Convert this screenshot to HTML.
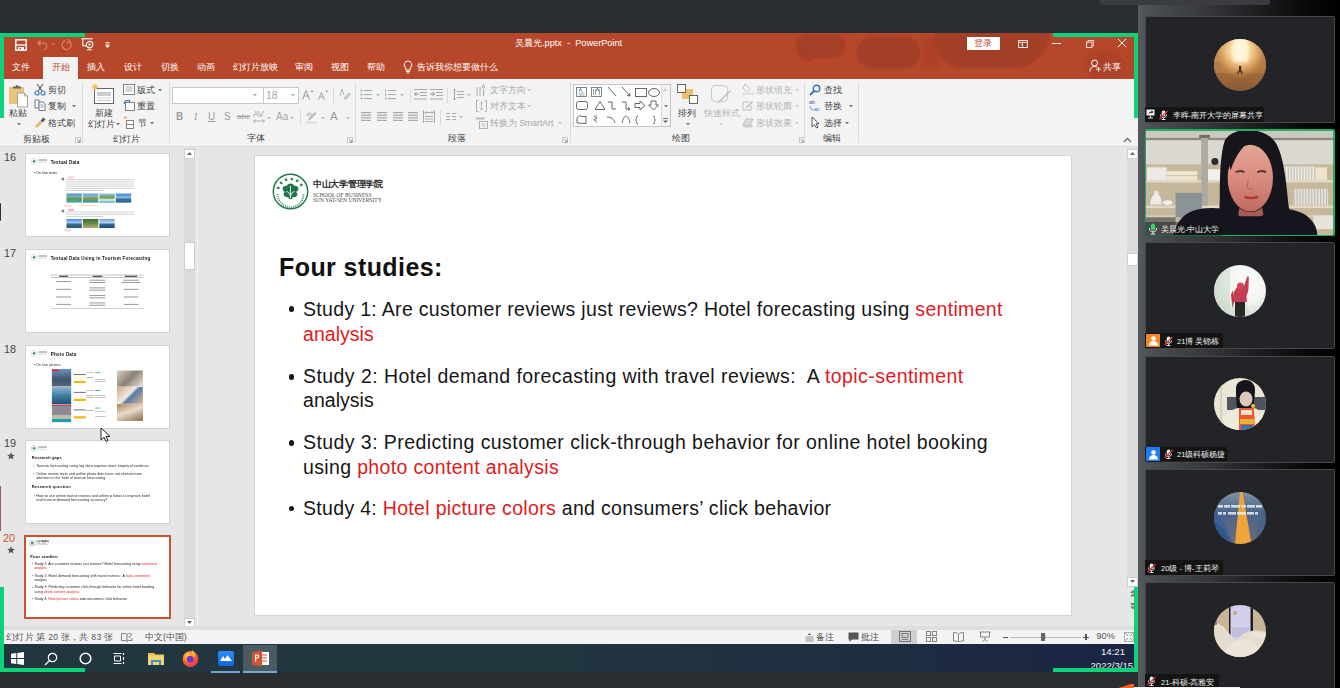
<!DOCTYPE html>
<html><head><meta charset="utf-8">
<style>
*{margin:0;padding:0;box-sizing:border-box}
html,body{width:1340px;height:688px;overflow:hidden;background:#2b2e31;font-family:"Liberation Sans",sans-serif}
.a{position:absolute}
.t{position:absolute;white-space:nowrap;line-height:1}
#title{left:0;top:33px;width:1138px;height:46px;background:#b7472a}
#ribbon{left:0;top:79px;width:1138px;height:67px;background:#f3f3f3}
#work{left:0;top:146px;width:1138px;height:484px;background:#e6e6e6}
#status{left:0;top:630px;width:1138px;height:14px;background:#f3f3f3}
#task{left:0;top:644px;width:1138px;height:28px;background:linear-gradient(90deg,#22363f 0%,#22373f 45%,#1f2f41 72%,#1b2443 100%)}
#panel{left:1138px;top:0;width:202px;height:688px;background:linear-gradient(90deg,#56595d 0px,#4a4d51 8%,#35373a 35%,#1c1d1f 60%,#080808 85%,#000 100%)}
#topbar{left:1100px;top:-4px;width:170px;height:9px;background:#3a3c40;border-radius:0 0 3px 3px}
.tile{position:absolute;left:1145px;width:190px;height:107px;background:#232427;border:1px solid #46474b;border-radius:2px}
.green{position:absolute;background:#0dd27a}
.slide{left:255px;top:156px;width:816px;height:459px;background:#fff;box-shadow:0 0 0 1px #d4d4d4}
.thumb{position:absolute;left:26px;width:143px;height:82px;background:#fff;box-shadow:0 0 0 1px #d0d0d0}
</style></head><body>
<div id="title" class="a"></div>
<div id="ribbon" class="a"></div>
<div id="work" class="a"></div>
<div id="rbline" class="a" style="left:0;top:146px;width:1138px;height:1px;background:#dbdbdb"></div>
<div id="status" class="a"></div>
<div id="task" class="a"></div>
<div id="panel" class="a"></div>
<div id="topbar" class="a"></div>

<!-- TITLE BAR -->
<div class="a" style="left:760px;top:33px;width:378px;height:46px;overflow:hidden">
 <div class="a" style="left:36px;top:1px;width:49px;height:24px;border-radius:12px;background:#a53f27;filter:blur(1.2px)"></div>
 <div class="a" style="left:40px;top:20px;width:10px;height:8px;background:#a53f27;filter:blur(1.2px);transform:skewX(30deg)"></div>
 <div class="a" style="left:97px;top:4px;width:63px;height:31px;border-radius:15px;background:#a33e27;filter:blur(1.2px)"></div>
 <div class="a" style="left:162px;top:4px;width:18px;height:30px;background:#ab4229;filter:blur(1.5px);opacity:.8"></div>
 <div class="a" style="left:175px;top:-2px;width:115px;height:37px;border-radius:0 0 40px 30px;background:#a43f27;filter:blur(1.2px)"></div>
 <div class="a" style="left:325px;top:18px;width:40px;height:30px;border-radius:50%;background:#ab4229;filter:blur(2px)"></div>
</div>
<svg class="a" style="left:15px;top:38.8px" width="12" height="12" viewBox="0 0 12 12"><rect x=".8" y=".8" width="10.4" height="10.4" fill="none" stroke="#fff" stroke-width="1.4"/><path d="M.8 6h10.4" stroke="#fff" stroke-width="1.3"/><rect x="3" y="8" width="6" height="3.2" fill="#fff"/><rect x="4.5" y="8.8" width="1.6" height="1.6" fill="#b7472a"/></svg>
<svg class="a" style="left:35.5px;top:38.5px" width="20" height="11" viewBox="0 0 20 11"><path d="M2.5 4.2h5a3.2 3.2 0 0 1 0 6.4" fill="none" stroke="#d48670" stroke-width="1.2"/><path d="M4.6 1.5L1.8 4.2l2.8 2.7" fill="none" stroke="#d48670" stroke-width="1.2"/><path d="M15.5 4.5h3.5l-1.75 2z" fill="#d48670"/></svg>
<svg class="a" style="left:60.5px;top:38.5px" width="12" height="12" viewBox="0 0 12 12"><path d="M8.8 2.6A4.6 4.6 0 1 1 4.2 1.6" fill="none" stroke="#d48670" stroke-width="1.2"/><path d="M6.5 .3l2.6 2.4-3 1.6" fill="none" stroke="#d48670" stroke-width="1.1"/></svg>
<svg class="a" style="left:81px;top:38px" width="13" height="13" viewBox="0 0 13 13"><path d="M.3 .8h11.4" stroke="#fff" stroke-width="1.1"/><path d="M1.8 .8v6.9h3.4" fill="none" stroke="#fff" stroke-width="1.1"/><circle cx="8.6" cy="6.6" r="3.2" fill="none" stroke="#fff" stroke-width="1.1"/><path d="M7.6 5v3.2l2.5-1.6z" fill="#fff"/><path d="M6 11.8h5M8.3 9.8v2" stroke="#fff" stroke-width=".9"/></svg>
<svg class="a" style="left:105px;top:41.5px" width="5" height="6" viewBox="0 0 5 6"><rect x=".5" y="0" width="4" height="1" fill="#f3d8d0"/><rect x=".5" y="1.6" width="4" height="1" fill="#f3d8d0"/><path d="M0 3.2h5L2.5 6z" fill="#fff"/></svg>
<div class="t" style="left:515px;top:39px;font-size:9.2px;color:#fff">吴晨光.pptx&nbsp; - &nbsp;PowerPoint</div>
<div class="a" style="left:967px;top:37px;width:33px;height:13px;background:#fff"></div>
<div class="t" style="left:974px;top:39px;font-size:9px;color:#b7472a">登录</div>
<svg class="a" style="left:1018px;top:40px" width="10" height="8" viewBox="0 0 12 10"><rect x="0.6" y="0.6" width="10.8" height="8.8" fill="none" stroke="#fff" stroke-width="1.1"/><path d="M0.6 3h10.8M5.5 3v6" stroke="#fff" stroke-width="1"/><path d="M3 5l1 1 1-1" stroke="#fff" fill="none" stroke-width=".8"/></svg>
<div class="a" style="left:1052px;top:43px;width:9px;height:1px;background:#fff"></div>
<svg class="a" style="left:1086px;top:39.5px" width="8" height="8" viewBox="0 0 10 10"><rect x="0.6" y="2.6" width="6.8" height="6.8" fill="none" stroke="#fff" stroke-width="1"/><path d="M2.5 2.6V0.6h6.8v6.8H7.4" fill="none" stroke="#fff" stroke-width="1"/></svg>
<svg class="a" style="left:1117px;top:38px" width="10" height="10" viewBox="0 0 11 11"><path d="M1 1l9 9M10 1l-9 9" stroke="#fff" stroke-width="1.1"/></svg>
<!-- tabs -->
<div class="a" style="left:43px;top:57px;width:35px;height:22px;background:#f3f3f3"></div>
<div class="t" style="left:12px;top:63px;font-size:8.6px;color:#fff">文件</div>
<div class="t" style="left:52px;top:63px;font-size:8.6px;color:#b7472a">开始</div>
<div class="t" style="left:87px;top:63px;font-size:8.6px;color:#fff">插入</div>
<div class="t" style="left:124px;top:63px;font-size:8.6px;color:#fff">设计</div>
<div class="t" style="left:161px;top:63px;font-size:8.6px;color:#fff">切换</div>
<div class="t" style="left:197px;top:63px;font-size:8.6px;color:#fff">动画</div>
<div class="t" style="left:233px;top:63px;font-size:8.6px;color:#fff">幻灯片放映</div>
<div class="t" style="left:295px;top:63px;font-size:8.6px;color:#fff">审阅</div>
<div class="t" style="left:331px;top:63px;font-size:8.6px;color:#fff">视图</div>
<div class="t" style="left:367px;top:63px;font-size:8.6px;color:#fff">帮助</div>
<svg class="a" style="left:403px;top:60px" width="10" height="14" viewBox="0 0 10 14"><path d="M5 1a3.8 3.8 0 0 0-2.2 6.9V10h4.4V7.9A3.8 3.8 0 0 0 5 1z" fill="none" stroke="#fff" stroke-width="1"/><path d="M3 11.5h4M3.6 13h2.8" stroke="#fff" stroke-width="1"/></svg>
<div class="t" style="left:417px;top:63px;font-size:8.6px;color:#fff">告诉我你想要做什么</div>
<svg class="a" style="left:1089px;top:59px" width="12" height="13" viewBox="0 0 12 13"><circle cx="5.5" cy="4" r="3" fill="none" stroke="#fff" stroke-width="1"/><path d="M0.8 12.5c0-3 2-5 4.7-5 1 0 1.8.2 2.5.7" fill="none" stroke="#fff" stroke-width="1"/><path d="M9.5 8v4.5M7.2 10.2h4.6" stroke="#fff" stroke-width="1"/></svg>
<div class="t" style="left:1103px;top:63px;font-size:8.6px;color:#fff">共享</div>


<!-- RIBBON -->
<svg class="a" style="left:8px;top:84px" width="22" height="24" viewBox="0 0 22 24"><rect x="1" y="3" width="15" height="17" rx="1" fill="#e9c57a"/><path d="M5 4.5V2.5h2.5a1.5 1.5 0 0 1 3 0H13v2z" fill="#666"/><path d="M9.5 9h7l3 3v11h-10z" fill="#fff" stroke="#999" stroke-width=".9"/><path d="M16.5 9v3h3" fill="none" stroke="#999" stroke-width=".9"/></svg>
<div class="t" style="left:9px;top:109.1px;font-size:8.6px;color:#444">粘贴</div>
<svg class="a" style="left:17.2px;top:123px" width="4" height="2.4" viewBox="0 0 5 3"><path d="M0 0h5L2.5 3z" fill="#777"/></svg>
<svg class="a" style="left:34px;top:83px" width="12" height="13" viewBox="0 0 12 13"><path d="M3 1l5 7M9 1L4 8" stroke="#555" stroke-width="1.1"/><circle cx="3" cy="10" r="2" fill="none" stroke="#3b7cc4" stroke-width="1.2"/><circle cx="9" cy="10" r="2" fill="none" stroke="#3b7cc4" stroke-width="1.2"/></svg>
<div class="t" style="left:48px;top:85.6px;font-size:8.6px;color:#444">剪切</div>
<svg class="a" style="left:34px;top:99px" width="12" height="12" viewBox="0 0 12 12"><path d="M1 1h4v8H1z" fill="#fff" stroke="#666" stroke-width=".9"/><path d="M5 3h4l2 2v6.5H5z" fill="#fff" stroke="#666" stroke-width=".9"/><path d="M6.5 6h3M6.5 8h3" stroke="#3b7cc4" stroke-width=".8"/></svg>
<div class="t" style="left:48px;top:101.6px;font-size:8.6px;color:#444">复制</div>
<svg class="a" style="left:72.2px;top:105px" width="4" height="2.4" viewBox="0 0 5 3"><path d="M0 0h5L2.5 3z" fill="#777"/></svg>
<svg class="a" style="left:34px;top:116px" width="13" height="12" viewBox="0 0 13 12"><path d="M1 10l5-5 2 2-5 5z" fill="#e6b865"/><path d="M6.5 4.5l3-3 2 2-3 3z" fill="#555"/></svg>
<div class="t" style="left:48px;top:118.6px;font-size:8.6px;color:#444">格式刷</div>
<div class="t" style="left:23px;top:134.6px;font-size:8.6px;color:#444">剪贴板</div>
<svg class="a" style="left:75px;top:137px" width="6" height="6" viewBox="0 0 6 6"><path d="M0.5 0.5h5v5h-5z" fill="none" stroke="#bbb" stroke-width=".8"/><path d="M2 2l3 3M5 3v2H3" stroke="#888" stroke-width=".8" fill="none"/></svg>
<div class="a" style="left:82px;top:82px;width:1px;height:61px;background:#dadada"></div>
<svg class="a" style="left:91px;top:83px" width="24" height="22" viewBox="0 0 24 22"><rect x="3.5" y="5.5" width="19" height="15" fill="#fff" stroke="#666" stroke-width="1"/><rect x="6" y="9" width="14" height="4" fill="#ccc"/><path d="M6 15h14M6 17.5h14" stroke="#ccc" stroke-width="1"/><circle cx="4" cy="4" r="2.2" fill="#f0c050"/><path d="M4 0v8M0 4h8M1.2 1.2l5.6 5.6M6.8 1.2l-5.6 5.6" stroke="#f0c050" stroke-width=".8"/></svg>
<div class="t" style="left:95px;top:108.6px;font-size:8.6px;color:#444">新建</div>
<div class="t" style="left:88px;top:119.6px;font-size:8.6px;color:#444">幻灯片</div>
<svg class="a" style="left:116.2px;top:123px" width="4" height="2.4" viewBox="0 0 5 3"><path d="M0 0h5L2.5 3z" fill="#777"/></svg>
<svg class="a" style="left:123px;top:84px" width="12" height="11" viewBox="0 0 12 11"><rect x=".5" y=".5" width="11" height="10" fill="#fff" stroke="#777" stroke-width=".9"/><path d="M2.5 3h7M2.5 5h7M2.5 7h7" stroke="#999" stroke-width=".8"/></svg>
<div class="t" style="left:137px;top:85.6px;font-size:8.6px;color:#444">版式</div>
<svg class="a" style="left:158.2px;top:89px" width="4" height="2.4" viewBox="0 0 5 3"><path d="M0 0h5L2.5 3z" fill="#777"/></svg>
<svg class="a" style="left:123px;top:100px" width="12" height="11" viewBox="0 0 12 11"><rect x="2.5" y="2.5" width="9" height="8" fill="#fff" stroke="#777" stroke-width=".9"/><path d="M1 4a4 4 0 0 1 6-3" fill="none" stroke="#3b7cc4" stroke-width="1.3"/><path d="M5.5 0l2 1.2-1.5 1.5" fill="#3b7cc4"/></svg>
<div class="t" style="left:137px;top:101.6px;font-size:8.6px;color:#444">重置</div>
<svg class="a" style="left:123px;top:116px" width="12" height="13" viewBox="0 0 12 13"><path d="M1 1.5h3" stroke="#f0a030" stroke-width="1.5"/><rect x="3.5" y="4.5" width="7" height="8" fill="#fff" stroke="#777" stroke-width=".9"/><path d="M3.5 8.5h7" stroke="#777" stroke-width=".9"/></svg>
<div class="t" style="left:138px;top:118.6px;font-size:8.6px;color:#444">节</div>
<svg class="a" style="left:150.2px;top:122px" width="4" height="2.4" viewBox="0 0 5 3"><path d="M0 0h5L2.5 3z" fill="#777"/></svg>
<div class="t" style="left:113px;top:134.6px;font-size:8.6px;color:#444">幻灯片</div>
<div class="a" style="left:169px;top:82px;width:1px;height:61px;background:#dadada"></div>
<div class="a" style="left:172px;top:87px;width:92px;height:17px;background:#fff;border:1px solid #c8c8c8"></div>
<div class="a" style="left:263px;top:87px;width:36px;height:17px;background:#fff;border:1px solid #c8c8c8"></div>
<svg class="a" style="left:253.2px;top:94px" width="4" height="2.4" viewBox="0 0 5 3"><path d="M0 0h5L2.5 3z" fill="#aaa"/></svg>
<svg class="a" style="left:291.2px;top:94px" width="4" height="2.4" viewBox="0 0 5 3"><path d="M0 0h5L2.5 3z" fill="#aaa"/></svg>
<div class="t" style="left:266px;top:90.1px;font-size:10.5px;color:#a6a6a6">18</div>
<svg class="a" style="left:302px;top:89px" width="12" height="11" viewBox="0 0 12 11"><path d="M0.5 10.5L4 1.5l3.5 9M2 7h4" fill="none" stroke="#999" stroke-width="1"/><path d="M8.5 3l1.5-2 1.5 2z" fill="#999"/></svg>
<svg class="a" style="left:318px;top:90px" width="11" height="10" viewBox="0 0 11 10"><path d="M0.5 9.5L3.5 2.5l3 7M1.7 7h3.6" fill="none" stroke="#999" stroke-width=".9"/><path d="M7.5 0.5h3l-1.5 2z" fill="#999"/></svg>
<div class="a" style="left:333px;top:88px;width:1px;height:16px;background:#dadada"></div>
<svg class="a" style="left:339px;top:88px" width="12" height="12" viewBox="0 0 12 12"><path d="M1 8l2-7 2 6" fill="none" stroke="#aaa" stroke-width=".9"/><path d="M5 10l5-5 1.5 1.5-5 5z" fill="#ccc" stroke="#aaa" stroke-width=".6"/></svg>
<div class="t" style="left:176px;top:112px;font-size:10px;color:#9c9c9c;font-weight:bold">B</div>
<div class="t" style="left:194px;top:112px;font-size:10px;color:#9c9c9c;font-style:italic;font-family:Liberation Serif">I</div>
<div class="t" style="left:208px;top:112px;font-size:10px;color:#9c9c9c;text-decoration:underline">U</div>
<div class="t" style="left:224px;top:112px;font-size:10px;color:#9c9c9c;">S</div>
<div class="t" style="left:237px;top:113px;font-size:8px;color:#a0a0a0;text-decoration:line-through">abc</div>
<div class="t" style="left:253px;top:110px;font-size:8.5px;color:#a0a0a0">AV</div>
<svg class="a" style="left:253px;top:119px" width="12" height="4" viewBox="0 0 12 4"><path d="M0.5 2h11M2.5 0.5L0.5 2l2 1.5M9.5 0.5l2 1.5-2 1.5" fill="none" stroke="#a0a0a0" stroke-width=".8"/></svg>
<svg class="a" style="left:267.2px;top:117px" width="4" height="2.4" viewBox="0 0 5 3"><path d="M0 0h5L2.5 3z" fill="#bdbdbd"/></svg>
<div class="t" style="left:276px;top:112px;font-size:10px;color:#a6a6a6">Aa</div>
<svg class="a" style="left:290.2px;top:117px" width="4" height="2.4" viewBox="0 0 5 3"><path d="M0 0h5L2.5 3z" fill="#bdbdbd"/></svg>
<div class="a" style="left:300px;top:110px;width:1px;height:15px;background:#dadada"></div>
<svg class="a" style="left:305px;top:110px" width="14" height="14" viewBox="0 0 14 14"><text x="1" y="6" font-size="6" fill="#aaa" font-family="Liberation Sans">ab</text><path d="M3 9l7-7 1.5 1.5-7 7z" fill="#bbb"/><rect x="1" y="11.5" width="11" height="2" fill="#ddd"/></svg>
<svg class="a" style="left:321.2px;top:117px" width="4" height="2.4" viewBox="0 0 5 3"><path d="M0 0h5L2.5 3z" fill="#bdbdbd"/></svg>
<div class="t" style="left:330px;top:111px;font-size:11.5px;color:#9a9a9a">A</div>
<svg class="a" style="left:346.2px;top:117px" width="4" height="2.4" viewBox="0 0 5 3"><path d="M0 0h5L2.5 3z" fill="#bdbdbd"/></svg>
<div class="t" style="left:247px;top:133.6px;font-size:8.6px;color:#444">字体</div>
<svg class="a" style="left:347px;top:137px" width="6" height="6" viewBox="0 0 6 6"><path d="M0.5 0.5h5v5h-5z" fill="none" stroke="#bbb" stroke-width=".8"/><path d="M2 2l3 3M5 3v2H3" stroke="#888" stroke-width=".8" fill="none"/></svg>
<div class="a" style="left:355px;top:82px;width:1px;height:61px;background:#dadada"></div>
<svg class="a" style="left:360px;top:89px" width="12" height="11" viewBox="0 0 12 11"><g fill="#aaa"><circle cx="1.5" cy="1.5" r="1.1"/><circle cx="1.5" cy="5.5" r="1.1"/><circle cx="1.5" cy="9.5" r="1.1"/><rect x="4" y="1" width="8" height="1.1"/><rect x="4" y="5" width="8" height="1.1"/><rect x="4" y="9" width="8" height="1.1"/></g></svg>
<svg class="a" style="left:376.2px;top:94px" width="4" height="2.4" viewBox="0 0 5 3"><path d="M0 0h5L2.5 3z" fill="#bdbdbd"/></svg>
<svg class="a" style="left:384px;top:89px" width="12" height="11" viewBox="0 0 12 11"><g fill="#aaa"><rect x="1" y="0.5" width="1" height="2.5"/><rect x="1" y="4.5" width="1.5" height="2"/><rect x="1" y="8.5" width="1.5" height="2"/><rect x="4" y="1" width="8" height="1.1"/><rect x="4" y="5" width="8" height="1.1"/><rect x="4" y="9" width="8" height="1.1"/></g></svg>
<svg class="a" style="left:400.2px;top:94px" width="4" height="2.4" viewBox="0 0 5 3"><path d="M0 0h5L2.5 3z" fill="#bdbdbd"/></svg>
<div class="a" style="left:410px;top:88px;width:1px;height:15px;background:#dadada"></div>
<svg class="a" style="left:414px;top:89px" width="13" height="11" viewBox="0 0 13 11"><g fill="#aaa"><rect x="0" y="0" width="13" height="1"/><rect x="6" y="3" width="7" height="1"/><rect x="6" y="6" width="7" height="1"/><rect x="0" y="9.5" width="13" height="1"/></g><path d="M0.5 5h4.5M2.5 3L0.5 5l2 2" stroke="#888" fill="none" stroke-width=".9"/></svg>
<svg class="a" style="left:430px;top:89px" width="13" height="11" viewBox="0 0 13 11"><g fill="#aaa"><rect x="0" y="0" width="13" height="1"/><rect x="6" y="3" width="7" height="1"/><rect x="6" y="6" width="7" height="1"/><rect x="0" y="9.5" width="13" height="1"/></g><path d="M0 5h4.5M2.5 3l2 2-2 2" stroke="#888" fill="none" stroke-width=".9"/></svg>
<div class="a" style="left:447px;top:88px;width:1px;height:15px;background:#dadada"></div>
<svg class="a" style="left:453px;top:88px" width="11" height="13" viewBox="0 0 11 13"><path d="M1.5 1v11M0 2.5l1.5-1.5 1.5 1.5M0 10.5l1.5 1.5 1.5-1.5" stroke="#999" fill="none" stroke-width=".9"/><g fill="#aaa"><rect x="4" y="3" width="7" height="1"/><rect x="4" y="6" width="7" height="1"/><rect x="4" y="9" width="7" height="1"/></g></svg>
<svg class="a" style="left:467.2px;top:94px" width="4" height="2.4" viewBox="0 0 5 3"><path d="M0 0h5L2.5 3z" fill="#bdbdbd"/></svg>
<svg class="a" style="left:476px;top:84px" width="10" height="12" viewBox="0 0 10 12"><g stroke="#aaa" stroke-width="1"><path d="M1 3v9M4 3v9M7.5 5v7"/></g><path d="M6 4.5l1.5-4 1.5 4" fill="none" stroke="#999" stroke-width=".8"/></svg>
<div class="t" style="left:490px;top:85.6px;font-size:8.6px;color:#a6a6a6">文字方向</div>
<svg class="a" style="left:527.2px;top:89px" width="4" height="2.4" viewBox="0 0 5 3"><path d="M0 0h5L2.5 3z" fill="#c6c6c6"/></svg>
<svg class="a" style="left:476px;top:100px" width="11" height="12" viewBox="0 0 11 12"><path d="M2.5 .5H.5v11h2M8.5 .5h2v11h-2" fill="none" stroke="#aaa" stroke-width=".9"/><path d="M5.5 2v8M4 3.5L5.5 2 7 3.5M4 8.5L5.5 10 7 8.5" fill="none" stroke="#aaa" stroke-width=".8"/></svg>
<div class="t" style="left:490px;top:101.6px;font-size:8.6px;color:#a6a6a6">对齐文本</div>
<svg class="a" style="left:527.2px;top:105px" width="4" height="2.4" viewBox="0 0 5 3"><path d="M0 0h5L2.5 3z" fill="#c6c6c6"/></svg>
<svg class="a" style="left:476px;top:116px" width="12" height="13" viewBox="0 0 12 13"><path d="M0 1.5h9l-1 2H0z" fill="#bbb"/><rect x="3.5" y="5.5" width="8" height="7" fill="none" stroke="#aaa" stroke-width=".9"/><path d="M5.5 8h4M5.5 10h4" stroke="#aaa" stroke-width=".7"/></svg>
<div class="t" style="left:490px;top:118.6px;font-size:8.6px;color:#a6a6a6">转换为 SmartArt</div>
<svg class="a" style="left:558.2px;top:122px" width="4" height="2.4" viewBox="0 0 5 3"><path d="M0 0h5L2.5 3z" fill="#c6c6c6"/></svg>
<svg class="a" style="left:361px;top:112px" width="10" height="10.4" viewBox="0 0 10 10.4"><rect x="0" y="0.0" width="10" height="1.2" fill="#a9a9a9"/><rect x="0" y="2.6" width="10" height="1.2" fill="#a9a9a9"/><rect x="0" y="5.2" width="10" height="1.2" fill="#a9a9a9"/><rect x="0" y="7.800000000000001" width="10" height="1.2" fill="#a9a9a9"/></svg>
<svg class="a" style="left:377px;top:112px" width="10" height="10.4" viewBox="0 0 10 10.4"><rect x="0" y="0.0" width="10" height="1.2" fill="#a9a9a9"/><rect x="0" y="2.6" width="10" height="1.2" fill="#a9a9a9"/><rect x="0" y="5.2" width="10" height="1.2" fill="#a9a9a9"/><rect x="0" y="7.800000000000001" width="10" height="1.2" fill="#a9a9a9"/></svg>
<svg class="a" style="left:393px;top:112px" width="10" height="10.4" viewBox="0 0 10 10.4"><rect x="0" y="0.0" width="10" height="1.2" fill="#a9a9a9"/><rect x="0" y="2.6" width="10" height="1.2" fill="#a9a9a9"/><rect x="0" y="5.2" width="10" height="1.2" fill="#a9a9a9"/><rect x="0" y="7.800000000000001" width="10" height="1.2" fill="#a9a9a9"/></svg>
<svg class="a" style="left:408px;top:112px" width="10" height="10.4" viewBox="0 0 10 10.4"><rect x="0" y="0.0" width="10" height="1.2" fill="#a9a9a9"/><rect x="0" y="2.6" width="10" height="1.2" fill="#a9a9a9"/><rect x="0" y="5.2" width="10" height="1.2" fill="#a9a9a9"/><rect x="0" y="7.800000000000001" width="10" height="1.2" fill="#a9a9a9"/></svg>
<svg class="a" style="left:423px;top:110px" width="12" height="13" viewBox="0 0 12 13"><g fill="#aaa"><rect x="0" y="0" width="1" height="13"/><rect x="11" y="0" width="1" height="13"/><rect x="2" y="6" width="8" height="1"/><rect x="2" y="8.5" width="8" height="1"/><rect x="2" y="11" width="8" height="1"/></g><path d="M2 2.5h8M3.5 1L2 2.5 3.5 4M8.5 1L10 2.5 8.5 4" stroke="#999" fill="none" stroke-width=".8"/></svg>
<div class="a" style="left:440px;top:110px;width:1px;height:15px;background:#dadada"></div>
<svg class="a" style="left:446px;top:113px" width="10" height="8" viewBox="0 0 10 8"><g fill="#aaa"><rect x="0" y="0" width="4" height="1"/><rect x="0" y="3" width="4" height="1"/><rect x="0" y="6" width="4" height="1"/><rect x="6" y="0" width="4" height="1"/><rect x="6" y="3" width="4" height="1"/><rect x="6" y="6" width="4" height="1"/></g></svg>
<svg class="a" style="left:459.2px;top:116px" width="4" height="2.4" viewBox="0 0 5 3"><path d="M0 0h5L2.5 3z" fill="#bdbdbd"/></svg>
<div class="t" style="left:448px;top:133.6px;font-size:8.6px;color:#444">段落</div>
<svg class="a" style="left:562px;top:137px" width="6" height="6" viewBox="0 0 6 6"><path d="M0.5 0.5h5v5h-5z" fill="none" stroke="#bbb" stroke-width=".8"/><path d="M2 2l3 3M5 3v2H3" stroke="#888" stroke-width=".8" fill="none"/></svg>
<div class="a" style="left:570px;top:82px;width:1px;height:61px;background:#dadada"></div>
<div class="a" style="left:573px;top:84px;width:98px;height:43px;background:#fff;border:1px solid #c6c6c6"></div>
<div class="a" style="left:661px;top:85px;width:9px;height:41px;background:#f3f3f3;border-left:1px solid #ddd"></div>
<svg class="a" style="left:664.2px;top:105px" width="4" height="2.4" viewBox="0 0 5 3"><path d="M0 0h5L2.5 3z" fill="#777"/></svg>
<svg class="a" style="left:663px;top:118px" width="6" height="6" viewBox="0 0 6 6"><rect x="0" y="0" width="5" height=".9" fill="#666"/><path d="M0 2.5h5L2.5 5z" fill="#666"/></svg>
<div class="a" style="left:663px;top:88px;width:5px;height:3px;border-bottom:3px solid #ccc;border-left:2.5px solid transparent;border-right:2.5px solid transparent;width:0;height:0"></div>
<svg class="a" style="left:574px;top:85px" width="87" height="42" viewBox="0 0 87 42"><g fill="none" stroke="#555" stroke-width=".9">
<rect x="2.5" y="2.5" width="10" height="9" stroke="#777"/><path d="M4.5 8h6M4.5 10h6" stroke="#999"/><path d="M5 6.5l1.5-3 1.5 3" stroke="#3b7cc4"/>
<rect x="17.5" y="2.5" width="10" height="9" stroke="#777"/><path d="M19.5 4v6M21.5 4v6M25.5 4v6" stroke="#999"/><path d="M22.5 6l1-3 1 3" stroke="#3b7cc4"/>
<path d="M34 2l8 9"/><path d="M48 2l8 9M56 11l-3-.5M56 11l-.5-3"/>
<rect x="61.5" y="3.5" width="11" height="8"/><ellipse cx="80" cy="7.5" rx="5.5" ry="4"/>
<rect x="2.5" y="16.5" width="11" height="8" rx="2"/><path d="M21 24.5l5-8 5 8z"/><path d="M34 17h4v7h4"/><path d="M48 17h4v7h4M56 24l-2-1.5M56 24l-2 1.5"/>
<path d="M61 18.5h5v-2.5l5 4.5-5 4.5v-2.5h-5z"/><path d="M77 16h5v4h2.5l-5 5-5-5H77z"/>
<path d="M3 38V32.5c2-2 4-2 5-1h4v7z"/><path d="M20 31l3 2-3 2 3 2M22 30v1"/><path d="M33 32c4 0 7 2 8 6"/><path d="M48 38c1-5 3-7 4-7s3 2 4 7"/>
<path d="M64 31c-1.5 0-1.5 1-1.5 2.5s-1 1.5-1 1.5 1 0 1 1.5 0 2.5 1.5 2.5" /><path d="M79 31c1.5 0 1.5 1 1.5 2.5s1 1.5 1 1.5-1 0-1 1.5 0 2.5-1.5 2.5"/>
</g></svg>
<svg class="a" style="left:677px;top:84px" width="22" height="20" viewBox="0 0 22 20"><rect x="5" y="5" width="11" height="10" fill="#eec06a"/><rect x=".5" y=".5" width="8" height="8" fill="#fff" stroke="#555" stroke-width=".9"/><rect x="12.5" y="11.5" width="8" height="8" fill="#fff" stroke="#555" stroke-width=".9"/></svg>
<div class="t" style="left:678px;top:108.6px;font-size:8.6px;color:#444">排列</div>
<svg class="a" style="left:686.2px;top:123px" width="4" height="2.4" viewBox="0 0 5 3"><path d="M0 0h5L2.5 3z" fill="#777"/></svg>
<svg class="a" style="left:710px;top:84px" width="22" height="22" viewBox="0 0 22 22"><rect x="1.5" y="1.5" width="16" height="16" rx="4" fill="#f7f2f7" stroke="#c8c8c8" stroke-width="1"/><path d="M20 6L9 17l-2 3 3-2L21 7z" fill="#bbb"/></svg>
<div class="t" style="left:704px;top:108.6px;font-size:8.6px;color:#b3b3b3">快速样式</div>
<svg class="a" style="left:719.2px;top:123px" width="4" height="2.4" viewBox="0 0 5 3"><path d="M0 0h5L2.5 3z" fill="#d0d0d0"/></svg>
<svg class="a" style="left:742px;top:83px" width="12" height="12" viewBox="0 0 12 12"><path d="M3 1l5 5-3 3-4-4z" fill="none" stroke="#bbb" stroke-width=".9"/><rect x="0" y="10" width="12" height="2" fill="#e0e0e0"/></svg>
<div class="t" style="left:756px;top:85.6px;font-size:8.6px;color:#b3b3b3">形状填充</div>
<svg class="a" style="left:795.2px;top:89px" width="4" height="2.4" viewBox="0 0 5 3"><path d="M0 0h5L2.5 3z" fill="#d0d0d0"/></svg>
<svg class="a" style="left:742px;top:99px" width="12" height="12" viewBox="0 0 12 12"><path d="M1 3h6M1 3v8h8V6" fill="none" stroke="#bbb" stroke-width=".9"/><path d="M4 8l6-6 1 1-6 6z" fill="#bbb"/></svg>
<div class="t" style="left:756px;top:101.6px;font-size:8.6px;color:#b3b3b3">形状轮廓</div>
<svg class="a" style="left:795.2px;top:105px" width="4" height="2.4" viewBox="0 0 5 3"><path d="M0 0h5L2.5 3z" fill="#d0d0d0"/></svg>
<svg class="a" style="left:742px;top:117px" width="12" height="11" viewBox="0 0 12 11"><path d="M1 8l3-6h7l-3 6z" fill="#ddd" stroke="#bbb" stroke-width=".9"/><ellipse cx="6" cy="9" rx="5" ry="1.5" fill="#ccc"/></svg>
<div class="t" style="left:756px;top:118.6px;font-size:8.6px;color:#b3b3b3">形状效果</div>
<svg class="a" style="left:795.2px;top:122px" width="4" height="2.4" viewBox="0 0 5 3"><path d="M0 0h5L2.5 3z" fill="#d0d0d0"/></svg>
<div class="t" style="left:672px;top:133.6px;font-size:8.6px;color:#444">绘图</div>
<svg class="a" style="left:799px;top:137px" width="6" height="6" viewBox="0 0 6 6"><path d="M0.5 0.5h5v5h-5z" fill="none" stroke="#bbb" stroke-width=".8"/><path d="M2 2l3 3M5 3v2H3" stroke="#888" stroke-width=".8" fill="none"/></svg>
<div class="a" style="left:804px;top:82px;width:1px;height:61px;background:#dadada"></div>
<svg class="a" style="left:809px;top:84px" width="12" height="12" viewBox="0 0 12 12"><circle cx="7.5" cy="4.5" r="3.3" fill="none" stroke="#3b6fb6" stroke-width="1.4"/><path d="M5 7l-4 4" stroke="#3b6fb6" stroke-width="1.8"/></svg>
<div class="t" style="left:824px;top:85.6px;font-size:8.6px;color:#444">查找</div>
<svg class="a" style="left:809px;top:99px" width="14" height="13" viewBox="0 0 14 13"><text x="0" y="5" font-size="5.5" fill="#6b4fa0" font-family="Liberation Sans">ab</text><text x="5" y="12" font-size="5.5" fill="#3b7cc4" font-family="Liberation Sans">ac</text><path d="M1 7c0 3 2 4 4 4" fill="none" stroke="#3b7cc4" stroke-width=".8"/></svg>
<div class="t" style="left:824px;top:101.6px;font-size:8.6px;color:#444">替换</div>
<svg class="a" style="left:849.2px;top:105px" width="4" height="2.4" viewBox="0 0 5 3"><path d="M0 0h5L2.5 3z" fill="#777"/></svg>
<svg class="a" style="left:811px;top:116px" width="9" height="13" viewBox="0 0 9 13"><path d="M1 1v10l2.5-2.5 2 3.5 1.5-.8-2-3.5H8z" fill="#fff" stroke="#444" stroke-width=".9"/></svg>
<div class="t" style="left:824px;top:118.6px;font-size:8.6px;color:#444">选择</div>
<svg class="a" style="left:845.2px;top:122px" width="4" height="2.4" viewBox="0 0 5 3"><path d="M0 0h5L2.5 3z" fill="#777"/></svg>
<div class="t" style="left:823px;top:133.6px;font-size:8.6px;color:#444">编辑</div>
<div class="a" style="left:858px;top:82px;width:1px;height:61px;background:#dadada"></div>
<svg class="a" style="left:1123px;top:137px" width="9" height="6" viewBox="0 0 9 6"><path d="M1 5l3.5-3.5L8 5" fill="none" stroke="#666" stroke-width="1.3"/></svg>
<!-- /RIBBON -->
<div class="a slide"></div>
<!-- SLIDE -->
<div class="t" style="left:303px;top:299.5px;font-size:19.5px;letter-spacing:0.318px;color:#161616">Study 1: Are customer reviews just reviews? Hotel forecasting using <span style="color:#e3191c">sentiment</span></div>
<div class="t" style="left:303px;top:324.7px;font-size:19.5px;letter-spacing:0.035px;color:#161616"><span style="color:#e3191c">analysis</span></div>
<div class="t" style="left:303px;top:367.3px;font-size:19.5px;letter-spacing:0.439px;color:#161616">Study 2: Hotel demand forecasting with travel reviews:&nbsp; A <span style="color:#e3191c">topic-sentiment</span></div>
<div class="t" style="left:303px;top:391.0px;font-size:19.5px;letter-spacing:0.035px;color:#161616">analysis</div>
<div class="t" style="left:303px;top:433.3px;font-size:19.5px;letter-spacing:0.429px;color:#161616">Study 3: Predicting customer click-through behavior for online hotel booking</div>
<div class="t" style="left:303px;top:457.8px;font-size:19.5px;letter-spacing:0.355px;color:#161616">using <span style="color:#e3191c">photo content analysis</span></div>
<div class="t" style="left:303px;top:499.0px;font-size:19.5px;letter-spacing:0.316px;color:#161616">Study 4: <span style="color:#e3191c">Hotel picture colors</span> and consumers&#8217; click behavior</div>
<div class="a" style="left:289px;top:306.4px;width:5.4px;height:5.4px;border-radius:50%;background:#161616"></div>
<div class="a" style="left:289px;top:374.2px;width:5.4px;height:5.4px;border-radius:50%;background:#161616"></div>
<div class="a" style="left:289px;top:440.2px;width:5.4px;height:5.4px;border-radius:50%;background:#161616"></div>
<div class="a" style="left:289px;top:505.9px;width:5.4px;height:5.4px;border-radius:50%;background:#161616"></div>
<div class="t" style="left:279px;top:254.5px;font-size:25px;font-weight:bold;letter-spacing:.42px;color:#111">Four studies:</div>
<svg class="a" style="left:272px;top:173px" width="37" height="37" viewBox="0 0 37 37">
<circle cx="18.5" cy="18.5" r="17.2" fill="#fff" stroke="#217a4c" stroke-width="1.5"/>
<path d="M6 16a12.8 12.8 0 0 1 25 0" fill="none" stroke="#2b7d52" stroke-width="2.6" stroke-dasharray="2.2 3.6" />
<path d="M5.5 21a13 13 0 0 0 26 0" fill="none" stroke="#4f9470" stroke-width="2" stroke-dasharray="1 1.1"/>
<path d="M18.5 10.5c-2.2 0-3.3 1.4-3.6 2.4-1.6-.6-4 .2-4.3 2.4-.3 2.3 1.5 3.4 2.3 3.6-1.2.8-1.6 2.4-.8 3.8 1 1.7 3.2 1.6 4 1.2.6 1.6 1.5 2.4 2.4 2.4s1.8-.8 2.4-2.4c.8.4 3 .5 4-1.2.8-1.4.4-3-.8-3.8.8-.2 2.6-1.3 2.3-3.6-.3-2.2-2.7-3-4.3-2.4-.3-1-1.4-2.4-3.6-2.4z" fill="#1f7448"/>
<path d="M18.5 13v12M14.5 18.5c2 .5 3.2 2 4 4.5M22.5 18.5c-2 .5-3.2 2-4 4.5" stroke="#fff" stroke-width=".9" fill="none"/>
</svg>
<div class="t" style="left:313px;top:179.8px;font-size:9.2px;font-weight:bold;color:#2a2a2a;letter-spacing:-.3px">中山大学管理学院</div>
<div class="t" style="left:313px;top:192.8px;font-size:5.6px;color:#4a4a4a;font-family:'Liberation Serif',serif;letter-spacing:0px">SCHOOL OF BUSINESS</div>
<div class="t" style="left:313px;top:197.6px;font-size:5.6px;color:#4a4a4a;font-family:'Liberation Serif',serif;letter-spacing:-.04px">SUN YAT-SEN UNIVERSITY</div>
<!-- /SLIDE -->
<!-- WORK -->
<div class="t" style="left:4px;top:151.8px;font-size:10.8px;color:#444">16</div>
<div class="t" style="left:4px;top:247.8px;font-size:10.8px;color:#444">17</div>
<div class="t" style="left:4px;top:343.8px;font-size:10.8px;color:#444">18</div>
<div class="t" style="left:4px;top:437.8px;font-size:10.8px;color:#444">19</div>
<svg class="a" style="left:6.5px;top:452px" width="8" height="8" viewBox="0 0 10 10"><path d="M5 0.3l1.4 3.2 3.4.3-2.6 2.2.8 3.4L5 7.6 2 9.4l.8-3.4L.2 3.8l3.4-.3z" fill="#555"/></svg>
<div class="t" style="left:3px;top:532.8px;font-size:10.8px;color:#c9532f">20</div>
<svg class="a" style="left:6.5px;top:546px" width="8" height="8" viewBox="0 0 10 10"><path d="M5 0.3l1.4 3.2 3.4.3-2.6 2.2.8 3.4L5 7.6 2 9.4l.8-3.4L.2 3.8l3.4-.3z" fill="#555"/></svg>
<div class="a" style="left:26px;top:154px;width:143px;height:82px;background:#fff;box-shadow:0 0 0 1px #d2d2d2"></div>
<div class="a" style="left:26px;top:154px;width:817px;height:459px;transform-origin:0 0;transform:scale(0.17503);overflow:hidden">
<svg class="a" style="left:26px;top:22px" width="40" height="40" viewBox="0 0 37 37"><circle cx="18.5" cy="18.5" r="15" fill="none" stroke="#5a9a78" stroke-width="3" stroke-dasharray="3 2"/><circle cx="18.5" cy="18.5" r="7" fill="#4f8f6d"/></svg><div class="a" style="left:70px;top:30px;width:50px;height:9px;background:#777;opacity:.55"></div><div class="a" style="left:70px;top:44px;width:50px;height:5px;background:#aaa;opacity:.5"></div>
<div class="t" style="left:141px;top:32.9px;font-size:26px;font-weight:bold;color:#161616;letter-spacing:1px">Textual Data</div>
<div class="a" style="left:48px;top:101px;width:6px;height:6px;border-radius:50%;background:#161616"></div><div class="t" style="left:58px;top:98.2px;font-size:21px;color:#161616;letter-spacing:.3px">On line texts</div>
<div class="a" style="left:203px;top:135px;width:16px;height:16px;border-radius:50%;background:#777"></div><div class="a" style="left:240px;top:128px;width:36px;height:12px;border:2px solid #e05050;border-radius:50%"></div><div class="a" style="left:228px;top:146px;width:390px;height:3px;background:#a8a8a8"></div>
<div class="a" style="left:228px;top:158px;width:390px;height:3px;background:#a8a8a8"></div>
<div class="a" style="left:228px;top:170px;width:390px;height:3px;background:#a8a8a8"></div>
<div class="a" style="left:228px;top:182px;width:390px;height:3px;background:#a8a8a8"></div>
<div class="a" style="left:228px;top:194px;width:390px;height:3px;background:#a8a8a8"></div>
<div class="a" style="left:228px;top:206px;width:215px;height:3px;background:#a8a8a8"></div>
<div class="a" style="left:231px;top:226px;width:88px;height:52px;background:linear-gradient(180deg,#3f86c8 0%,#7fb0d0 30%,#5c9a5a 55%,#4aa8b0 100%)"></div>
<div class="a" style="left:325px;top:226px;width:88px;height:52px;background:linear-gradient(180deg,#5a9ad8 0%,#8ab8d8 25%,#8a9a50 50%,#2f9aa0 100%)"></div>
<div class="a" style="left:419px;top:226px;width:88px;height:52px;background:linear-gradient(180deg,#9ac0e0 0%,#6a9a50 45%,#e0f0f0 70%,#40a0b0 100%)"></div>
<div class="a" style="left:513px;top:226px;width:88px;height:52px;background:linear-gradient(180deg,#3f7fd0 0%,#8ac0e8 45%,#3a70a0 60%,#2f6a8a 100%)"></div>
<div class="a" style="left:220px;top:290px;width:36px;height:12px;border:2px solid #e05050;border-radius:50%"></div><div class="a" style="left:300px;top:292px;width:110px;height:3px;background:#f0c080"></div>
<div class="a" style="left:203px;top:318px;width:16px;height:16px;border-radius:50%;background:#777"></div><div class="a" style="left:240px;top:313px;width:36px;height:12px;border:2px solid #e05050;border-radius:50%"></div><div class="a" style="left:228px;top:330px;width:390px;height:3px;background:#a8a8a8"></div>
<div class="a" style="left:228px;top:342px;width:390px;height:3px;background:#a8a8a8"></div>
<div class="a" style="left:228px;top:354px;width:215px;height:3px;background:#a8a8a8"></div>
<div class="a" style="left:231px;top:371px;width:88px;height:52px;background:linear-gradient(180deg,#4a8ad8 0%,#9ac4e8 40%,#3a6a8a 60%,#2a5a7a 100%)"></div>
<div class="a" style="left:325px;top:371px;width:88px;height:52px;background:linear-gradient(180deg,#3a6a3a 0%,#6a8a4a 50%,#b8a870 100%)"></div>
<div class="a" style="left:419px;top:371px;width:88px;height:52px;background:linear-gradient(180deg,#6aa0d8 0%,#b8d0e8 40%,#2f6a9a 60%,#1f4a6a 100%)"></div>
<div class="a" style="left:220px;top:430px;width:36px;height:12px;border:2px solid #e05050;border-radius:50%"></div></div>
<div class="a" style="left:26px;top:249.5px;width:143px;height:82px;background:#fff;box-shadow:0 0 0 1px #d2d2d2"></div>
<div class="a" style="left:26px;top:249.5px;width:817px;height:459px;transform-origin:0 0;transform:scale(0.17503);overflow:hidden">
<svg class="a" style="left:26px;top:22px" width="40" height="40" viewBox="0 0 37 37"><circle cx="18.5" cy="18.5" r="15" fill="none" stroke="#5a9a78" stroke-width="3" stroke-dasharray="3 2"/><circle cx="18.5" cy="18.5" r="7" fill="#4f8f6d"/></svg><div class="a" style="left:70px;top:30px;width:50px;height:9px;background:#777;opacity:.55"></div><div class="a" style="left:70px;top:44px;width:50px;height:5px;background:#aaa;opacity:.5"></div>
<div class="t" style="left:141px;top:32.9px;font-size:26px;font-weight:bold;color:#161616;letter-spacing:1.1px">Textual Data Using in Tourism Forecasting</div>
<div class="a" style="left:143px;top:142px;width:530px;height:1.5px;background:#555"></div><div class="a" style="left:143px;top:158px;width:530px;height:1.5px;background:#555"></div><div class="a" style="left:143px;top:334px;width:530px;height:1.5px;background:#777"></div><div class="a" style="left:190.0px;top:147px;width:50px;height:6px;background:#333"></div><div class="a" style="left:380.5px;top:147px;width:55px;height:6px;background:#333"></div><div class="a" style="left:565.0px;top:147px;width:70px;height:6px;background:#333"></div><div class="a" style="left:173px;top:178px;width:84px;height:5px;background:#8a8a8a"></div><div class="a" style="left:363px;top:170px;width:90px;height:5px;background:#8a8a8a"></div><div class="a" style="left:363px;top:183px;width:90px;height:5px;background:#8a8a8a"></div><div class="a" style="left:555px;top:170px;width:90px;height:5px;background:#8a8a8a"></div><div class="a" style="left:545px;top:183px;width:110px;height:5px;background:#8a8a8a"></div><div class="a" style="left:173px;top:222px;width:84px;height:5px;background:#8a8a8a"></div><div class="a" style="left:363px;top:214px;width:90px;height:5px;background:#8a8a8a"></div><div class="a" style="left:363px;top:227px;width:90px;height:5px;background:#8a8a8a"></div><div class="a" style="left:558px;top:222px;width:84px;height:5px;background:#8a8a8a"></div><div class="a" style="left:173px;top:266px;width:84px;height:5px;background:#8a8a8a"></div><div class="a" style="left:363px;top:258px;width:90px;height:5px;background:#8a8a8a"></div><div class="a" style="left:363px;top:271px;width:90px;height:5px;background:#8a8a8a"></div><div class="a" style="left:558px;top:266px;width:84px;height:5px;background:#8a8a8a"></div><div class="a" style="left:173px;top:308px;width:84px;height:5px;background:#8a8a8a"></div><div class="a" style="left:363px;top:300px;width:90px;height:5px;background:#8a8a8a"></div><div class="a" style="left:363px;top:313px;width:90px;height:5px;background:#8a8a8a"></div><div class="a" style="left:558px;top:308px;width:84px;height:5px;background:#8a8a8a"></div></div>
<div class="a" style="left:26px;top:345.5px;width:143px;height:82px;background:#fff;box-shadow:0 0 0 1px #d2d2d2"></div>
<div class="a" style="left:26px;top:345.5px;width:817px;height:459px;transform-origin:0 0;transform:scale(0.17503);overflow:hidden">
<svg class="a" style="left:26px;top:22px" width="40" height="40" viewBox="0 0 37 37"><circle cx="18.5" cy="18.5" r="15" fill="none" stroke="#5a9a78" stroke-width="3" stroke-dasharray="3 2"/><circle cx="18.5" cy="18.5" r="7" fill="#4f8f6d"/></svg><div class="a" style="left:70px;top:30px;width:50px;height:9px;background:#777;opacity:.55"></div><div class="a" style="left:70px;top:44px;width:50px;height:5px;background:#aaa;opacity:.5"></div>
<div class="t" style="left:141px;top:34.9px;font-size:26px;font-weight:bold;color:#161616;letter-spacing:1px">Photo Data</div>
<div class="a" style="left:48px;top:101px;width:6px;height:6px;border-radius:50%;background:#161616"></div><div class="t" style="left:58px;top:99.2px;font-size:21px;color:#333;letter-spacing:.3px">On line photos</div>
<div class="a" style="left:148px;top:131px;width:110px;height:100px;background:linear-gradient(180deg,#6d93c4,#3e5670 60%,#5d6470)"></div><div class="a" style="left:148px;top:135px;width:40px;height:10px;background:#d03030"></div><div class="a" style="left:148px;top:233px;width:110px;height:100px;background:linear-gradient(180deg,#8fb7d8,#3f7fa0 50%,#1e4f80)"></div><div class="a" style="left:148px;top:335px;width:110px;height:100px;background:linear-gradient(180deg,#cc4444 0 10%,#8d8a98 10% 60%,#c6b8aa 60% 80%,#1aa0a0 80%)"></div><div class="a" style="left:272px;top:160px;width:70px;height:6px;background:#777"></div><div class="a" style="left:272px;top:200px;width:70px;height:12px;background:#f2b90f;border-radius:3px"></div><div class="a" style="left:345px;top:150px;width:40px;height:50px;background:repeating-linear-gradient(180deg,#bbb 0 3px,transparent 3px 14px)"></div><div class="a" style="left:395px;top:150px;width:30px;height:5px;background:#2dbd8a"></div><div class="a" style="left:395px;top:170px;width:60px;height:40px;background:repeating-linear-gradient(180deg,#c4c4c4 0 3px,transparent 3px 10px)"></div><div class="a" style="left:272px;top:262px;width:70px;height:6px;background:#777"></div><div class="a" style="left:272px;top:302px;width:70px;height:12px;background:#f2b90f;border-radius:3px"></div><div class="a" style="left:345px;top:252px;width:40px;height:50px;background:repeating-linear-gradient(180deg,#bbb 0 3px,transparent 3px 14px)"></div><div class="a" style="left:395px;top:252px;width:30px;height:5px;background:#2dbd8a"></div><div class="a" style="left:395px;top:272px;width:60px;height:40px;background:repeating-linear-gradient(180deg,#c4c4c4 0 3px,transparent 3px 10px)"></div><div class="a" style="left:272px;top:362px;width:70px;height:6px;background:#777"></div><div class="a" style="left:272px;top:402px;width:70px;height:12px;background:#f2b90f;border-radius:3px"></div><div class="a" style="left:345px;top:352px;width:40px;height:50px;background:repeating-linear-gradient(180deg,#bbb 0 3px,transparent 3px 14px)"></div><div class="a" style="left:395px;top:352px;width:30px;height:5px;background:#2dbd8a"></div><div class="a" style="left:395px;top:372px;width:60px;height:40px;background:repeating-linear-gradient(180deg,#c4c4c4 0 3px,transparent 3px 10px)"></div><div class="a" style="left:520px;top:140px;width:148px;height:92px;background:linear-gradient(135deg,#d8d0c0,#8b8276 50%,#efe6d8)"></div><div class="a" style="left:520px;top:234px;width:148px;height:96px;background:linear-gradient(135deg,#c9ad80,#f0ebe5 45%,#5b7aa8 55%,#d4b88a)"></div><div class="a" style="left:520px;top:332px;width:148px;height:96px;background:linear-gradient(160deg,#b08050,#e9dccb 45%,#8b6a4a)"></div></div>
<div class="a" style="left:26px;top:441px;width:143px;height:82px;background:#fff;box-shadow:0 0 0 1px #d2d2d2"></div>
<div class="a" style="left:26px;top:441px;width:817px;height:459px;transform-origin:0 0;transform:scale(0.17503);overflow:hidden">
<svg class="a" style="left:26px;top:22px" width="40" height="40" viewBox="0 0 37 37"><circle cx="18.5" cy="18.5" r="15" fill="none" stroke="#5a9a78" stroke-width="3" stroke-dasharray="3 2"/><circle cx="18.5" cy="18.5" r="7" fill="#4f8f6d"/></svg><div class="a" style="left:70px;top:30px;width:50px;height:9px;background:#777;opacity:.55"></div><div class="a" style="left:70px;top:44px;width:50px;height:5px;background:#aaa;opacity:.5"></div>
<div class="t" style="left:33px;top:84.5px;font-size:23px;font-weight:bold;color:#161616;letter-spacing:.6px">Research gaps</div>
<div class="a" style="left:42px;top:138px;width:5px;height:5px;border-radius:50%;background:#161616"></div><div class="t" style="left:58px;top:131.6px;font-size:20.5px;color:#161616;letter-spacing:.35px;color:#222">Tourism forecasting using big data requires more empirical evidence.</div>
<div class="a" style="left:42px;top:184px;width:5px;height:5px;border-radius:50%;background:#161616"></div><div class="t" style="left:58px;top:177.6px;font-size:20.5px;color:#161616;letter-spacing:.35px;color:#222">Online review texts and online photo data have not elicited more</div>
<div class="t" style="left:58px;top:200.6px;font-size:20.5px;color:#161616;letter-spacing:.35px;color:#222">attention in the field of tourism forecasting.</div>
<div class="t" style="left:33px;top:252.4px;font-size:23px;font-weight:bold;color:#161616;letter-spacing:1px">Research question</div>
<div class="a" style="left:47px;top:310px;width:5px;height:5px;border-radius:50%;background:#161616"></div><div class="t" style="left:59px;top:303.6px;font-size:20.5px;color:#161616;letter-spacing:.35px;color:#222">How to use online tourist reviews and online p hotos to improve hotel</div>
<div class="t" style="left:59px;top:327.6px;font-size:20.5px;color:#161616;letter-spacing:.35px;color:#222">and tourism demand forecasting accuracy?</div>
</div>
<div class="a" style="left:24px;top:534.5px;width:146.5px;height:84.5px;border:2.6px solid #c9532f;background:#fff"></div>
<div class="a" style="left:26px;top:537px;width:817px;height:459px;transform-origin:0 0;transform:scale(0.17503);overflow:hidden">
<div class="t" style="left:48.0px;top:143.5px;font-size:19.5px;letter-spacing:0.318px;color:#161616">Study 1: Are customer reviews just reviews? Hotel forecasting using <span style="color:#e3191c">sentiment</span></div>
<div class="t" style="left:48.0px;top:168.7px;font-size:19.5px;letter-spacing:0.035px;color:#161616"><span style="color:#e3191c">analysis</span></div>
<div class="t" style="left:48.0px;top:211.3px;font-size:19.5px;letter-spacing:0.439px;color:#161616">Study 2: Hotel demand forecasting with travel reviews:&nbsp; A <span style="color:#e3191c">topic-sentiment</span></div>
<div class="t" style="left:48.0px;top:235.0px;font-size:19.5px;letter-spacing:0.035px;color:#161616">analysis</div>
<div class="t" style="left:48.0px;top:277.3px;font-size:19.5px;letter-spacing:0.429px;color:#161616">Study 3: Predicting customer click-through behavior for online hotel booking</div>
<div class="t" style="left:48.0px;top:301.8px;font-size:19.5px;letter-spacing:0.355px;color:#161616">using <span style="color:#e3191c">photo content analysis</span></div>
<div class="t" style="left:48.0px;top:343.0px;font-size:19.5px;letter-spacing:0.316px;color:#161616">Study 4: <span style="color:#e3191c">Hotel picture colors</span> and consumers&#8217; click behavior</div>
<div class="a" style="left:34.0px;top:150.4px;width:5.4px;height:5.4px;border-radius:50%;background:#161616"></div>
<div class="a" style="left:34.0px;top:218.2px;width:5.4px;height:5.4px;border-radius:50%;background:#161616"></div>
<div class="a" style="left:34.0px;top:284.2px;width:5.4px;height:5.4px;border-radius:50%;background:#161616"></div>
<div class="a" style="left:34.0px;top:349.9px;width:5.4px;height:5.4px;border-radius:50%;background:#161616"></div>
<div class="t" style="left:24.0px;top:98.5px;font-size:25px;font-weight:bold;letter-spacing:.42px;color:#111">Four studies:</div>
<svg class="a" style="left:17.0px;top:17.0px" width="37" height="37" viewBox="0 0 37 37">
<circle cx="18.5" cy="18.5" r="17.2" fill="#fff" stroke="#217a4c" stroke-width="1.5"/>
<path d="M6 16a12.8 12.8 0 0 1 25 0" fill="none" stroke="#2b7d52" stroke-width="2.6" stroke-dasharray="2.2 3.6" />
<path d="M5.5 21a13 13 0 0 0 26 0" fill="none" stroke="#4f9470" stroke-width="2" stroke-dasharray="1 1.1"/>
<path d="M18.5 10.5c-2.2 0-3.3 1.4-3.6 2.4-1.6-.6-4 .2-4.3 2.4-.3 2.3 1.5 3.4 2.3 3.6-1.2.8-1.6 2.4-.8 3.8 1 1.7 3.2 1.6 4 1.2.6 1.6 1.5 2.4 2.4 2.4s1.8-.8 2.4-2.4c.8.4 3 .5 4-1.2.8-1.4.4-3-.8-3.8.8-.2 2.6-1.3 2.3-3.6-.3-2.2-2.7-3-4.3-2.4-.3-1-1.4-2.4-3.6-2.4z" fill="#1f7448"/>
<path d="M18.5 13v12M14.5 18.5c2 .5 3.2 2 4 4.5M22.5 18.5c-2 .5-3.2 2-4 4.5" stroke="#fff" stroke-width=".9" fill="none"/>
</svg>
<div class="t" style="left:58.0px;top:23.8px;font-size:9.2px;font-weight:bold;color:#2a2a2a;letter-spacing:-.3px">中山大学管理学院</div>
<div class="t" style="left:58.0px;top:36.8px;font-size:5.6px;color:#4a4a4a;font-family:'Liberation Serif',serif;letter-spacing:0px">SCHOOL OF BUSINESS</div>
<div class="t" style="left:58.0px;top:41.6px;font-size:5.6px;color:#4a4a4a;font-family:'Liberation Serif',serif;letter-spacing:-.04px">SUN YAT-SEN UNIVERSITY</div>
</div>
<div class="a" style="left:184px;top:148px;width:11px;height:480px;background:#dcdcdc"></div>
<div class="a" style="left:184px;top:148.5px;width:11px;height:10px;background:#fff;border:1px solid #cfcfcf"></div>
<svg class="a" style="left:187px;top:151.5px" width="5" height="3" viewBox="0 0 5 3"><path d="M0 3h5L2.5 0z" fill="#666"/></svg>
<div class="a" style="left:184px;top:241.5px;width:11px;height:28px;background:#fff;border:1px solid #cfcfcf"></div>
<div class="a" style="left:184px;top:617.5px;width:11px;height:10px;background:#fff;border:1px solid #cfcfcf"></div>
<svg class="a" style="left:187px;top:621px" width="5" height="3" viewBox="0 0 5 3"><path d="M0 0h5L2.5 3z" fill="#666"/></svg>
<div class="a" style="left:197px;top:146px;width:1px;height:484px;background:#ededed"></div>
<div class="a" style="left:1127px;top:148px;width:10.5px;height:439px;background:#dcdcdc"></div>
<div class="a" style="left:1127px;top:148.5px;width:10.5px;height:10px;background:#fff;border:1px solid #cfcfcf"></div>
<svg class="a" style="left:1130px;top:151.5px" width="5" height="3" viewBox="0 0 5 3"><path d="M0 3h5L2.5 0z" fill="#666"/></svg>
<div class="a" style="left:1127px;top:253px;width:10.5px;height:12.5px;background:#fff;border:1px solid #cfcfcf"></div>
<div class="a" style="left:1127px;top:576.5px;width:10.5px;height:10px;background:#fff;border:1px solid #cfcfcf"></div>
<svg class="a" style="left:1130px;top:580px" width="5" height="3" viewBox="0 0 5 3"><path d="M0 0h5L2.5 3z" fill="#666"/></svg>
<svg class="a" style="left:1129.5px;top:590px" width="6" height="7" viewBox="0 0 6 7"><path d="M0 3L3 0l3 3zM0 6.5L3 3.5l3 3z" fill="#777"/></svg>
<svg class="a" style="left:1129.5px;top:603px" width="6" height="7" viewBox="0 0 6 7"><path d="M0 0l3 3 3-3zM0 3.5l3 3 3-3z" fill="#777"/></svg>
<div class="a" style="left:0;top:626px;width:1138px;height:4px;background:#dedede"></div>
<div class="a" style="left:0;top:203px;width:1.3px;height:18px;background:#333;border-radius:0 1px 1px 0"></div>
<div class="a" style="left:0;top:486px;width:1.2px;height:45px;background:#a05a58"></div>
<svg class="a" style="left:100px;top:427px" width="12" height="16" viewBox="0 0 12 16"><path d="M1 1v12l3-2.8 2 4.3 2-.9-2-4.2h4z" fill="#fff" stroke="#222" stroke-width="1"/></svg>
<!-- /WORK -->
<!-- BOTTOM -->
<div class="t" style="left:6px;top:632.6px;font-size:8.6px;color:#555;letter-spacing:.25px">幻灯片 第 20 张，共 83 张</div>
<svg class="a" style="left:121px;top:632px" width="12" height="10" viewBox="0 0 12 10"><path d="M.5 1.5h4l1.5 1v7L4.5 8.5h-4zM6 2.5l1.5-1h2M6 9.5l1.5-1H11V6" fill="none" stroke="#777" stroke-width=".9"/><path d="M8 6l3-4.5" stroke="#777" stroke-width="1"/></svg>
<div class="t" style="left:145px;top:632.6px;font-size:8.6px;color:#555;">中文(中国)</div>
<svg class="a" style="left:805px;top:632px" width="9" height="10" viewBox="0 0 9 10"><path d="M2.5 3L4.5 1l2 2z" fill="#666"/><path d="M.5 5h8M.5 7h8M.5 9h8" stroke="#777" stroke-width=".8"/></svg>
<div class="t" style="left:816px;top:632.6px;font-size:8.6px;color:#444;">备注</div>
<svg class="a" style="left:848px;top:632px" width="11" height="11" viewBox="0 0 11 11"><path d="M.5.5h10v7H4L1.5 10V7.5h-1z" fill="#555"/></svg>
<div class="t" style="left:861px;top:632.6px;font-size:8.6px;color:#444;">批注</div>
<div class="a" style="left:891px;top:629.5px;width:26px;height:14.5px;background:#cfcfcf"></div>
<svg class="a" style="left:899px;top:631px" width="12" height="11" viewBox="0 0 12 11"><rect x=".5" y=".5" width="11" height="10" fill="none" stroke="#666" stroke-width=".9"/><rect x="3" y="2.5" width="6" height="4" fill="none" stroke="#666" stroke-width=".8"/><path d="M3 8.5h6" stroke="#666" stroke-width=".8"/></svg>
<svg class="a" style="left:926px;top:631px" width="11" height="11" viewBox="0 0 11 11"><g fill="none" stroke="#777" stroke-width=".9"><rect x=".5" y=".5" width="4" height="4"/><rect x="6.5" y=".5" width="4" height="4"/><rect x=".5" y="6.5" width="4" height="4"/><rect x="6.5" y="6.5" width="4" height="4"/></g></svg>
<svg class="a" style="left:953px;top:631px" width="11" height="11" viewBox="0 0 11 11"><path d="M.5 1.5c2 0 4 .5 5 1.5 1-1 3-1.5 5-1.5v8.5c-2 0-4 .3-5 1-1-.7-3-1-5-1z" fill="none" stroke="#777" stroke-width=".9"/><path d="M5.5 3v7.5" stroke="#777" stroke-width=".9"/></svg>
<svg class="a" style="left:979px;top:631px" width="12" height="11" viewBox="0 0 12 11"><path d="M.5 1h11M1.5 1v5h9V1M6 6v2.5M3.5 10.5L6 8.5l2.5 2" fill="none" stroke="#777" stroke-width=".9"/></svg>
<div class="a" style="left:1003px;top:636.5px;width:4.5px;height:1.2px;background:#555"></div>
<div class="a" style="left:1010px;top:636.5px;width:71px;height:1px;background:#bbb"></div>
<div class="a" style="left:1045px;top:635px;width:1px;height:4px;background:#bbb"></div>
<div class="a" style="left:1041px;top:633px;width:3.5px;height:7.5px;background:#666"></div>
<div class="a" style="left:1083px;top:636.5px;width:6px;height:1.2px;background:#555"></div><div class="a" style="left:1085.4px;top:634px;width:1.2px;height:6px;background:#555"></div>
<div class="t" style="left:1096.5px;top:632.3px;font-size:9.2px;color:#555;">90%</div>
<svg class="a" style="left:1124px;top:632px" width="10" height="10" viewBox="0 0 10 10"><rect x=".5" y=".5" width="9" height="9" fill="none" stroke="#999" stroke-width=".8"/><path d="M1.5 1.5l2.5 2.5M8.5 1.5L6 4M1.5 8.5L4 6M8.5 8.5L6 6" stroke="#888" stroke-width=".9"/></svg>
<svg class="a" style="left:11px;top:652px" width="13" height="13" viewBox="0 0 13 13"><path d="M0 1.8l5.3-.8v5H0zM6.3.9L13 0v6H6.3zM0 7h5.3v5L0 11.2zM6.3 7H13v6l-6.7-.9z" fill="#fff"/></svg>
<svg class="a" style="left:44px;top:652px" width="14" height="14" viewBox="0 0 14 14"><circle cx="8.5" cy="5.5" r="4.2" fill="none" stroke="#fff" stroke-width="1.2"/><path d="M5.5 8.5L1 13" stroke="#fff" stroke-width="1.3"/></svg>
<svg class="a" style="left:79px;top:652px" width="13" height="13" viewBox="0 0 13 13"><circle cx="6.5" cy="6.5" r="5.3" fill="none" stroke="#fff" stroke-width="1.5"/></svg>
<svg class="a" style="left:113px;top:652px" width="13" height="13" viewBox="0 0 13 13"><g fill="none" stroke="#fff" stroke-width="1"><path d="M.5 1.5h8M.5 11.5h8M1.5 4h6v5h-6z"/></g><path d="M10.5 1v2M10.5 5v3M10.5 10v2" stroke="#fff" stroke-width="1.2"/></svg>
<svg class="a" style="left:148px;top:652px" width="16" height="14" viewBox="0 0 16 14"><path d="M0 1h6l1.5 1.5H16V13H0z" fill="#f3c04e"/><rect x="0" y="3.5" width="16" height="9.5" fill="#f9d46b"/><path d="M4 13V9h8v4" fill="none" stroke="#3b8fd6" stroke-width="2"/></svg>
<svg class="a" style="left:182px;top:650px" width="17" height="17" viewBox="0 0 17 17"><circle cx="8.5" cy="9" r="7.8" fill="#ff6a2b"/><circle cx="8.5" cy="9" r="7.8" fill="url(#ffg)"/><defs><radialGradient id="ffg" cx=".35" cy=".3" r=".8"><stop offset="0" stop-color="#ffd94a"/><stop offset=".5" stop-color="#ff6a2b"/><stop offset="1" stop-color="#e3246b"/></radialGradient></defs><circle cx="8.3" cy="9.2" r="3.4" fill="#6d36c9"/><path d="M10 1c2 2 2.5 4 1.5 6" stroke="#ffb93a" stroke-width="2" fill="none"/></svg>
<div class="a" style="left:218px;top:650.5px;width:15.5px;height:15.5px;border-radius:2px;background:linear-gradient(180deg,#2c8bff,#1265e0)"></div>
<svg class="a" style="left:219px;top:654px" width="14" height="8" viewBox="0 0 14 8"><path d="M1 7l3-5 2 3 2.5-4L13 7z" fill="#fff"/></svg>
<div class="a" style="left:211px;top:671px;width:29px;height:1.5px;background:#6fa3d6"></div>
<div class="a" style="left:243px;top:644.5px;width:34px;height:27.5px;background:#4a5b64"></div>
<div class="a" style="left:243px;top:671px;width:34px;height:1.5px;background:#76a8d8"></div>
<svg class="a" style="left:252px;top:650px" width="17" height="17" viewBox="0 0 17 17"><rect x="7" y="2" width="10" height="13" fill="#fff"/><path d="M9 5h6M9 8h6M9 11h6" stroke="#d35230" stroke-width="1.2"/><path d="M0 2.2L10 0.5v16L0 14.8z" fill="#d35230"/><path d="M3 4.5h2.3c1.3 0 2 .8 2 2s-.8 2-2 2H4.2v3H3z" fill="#fff"/><path d="M4.2 5.6v1.9h1c.6 0 .9-.4.9-1s-.3-.9-.9-.9z" fill="#d35230"/></svg>
<div class="t" style="left:1101px;top:647.1px;font-size:9.6px;color:#f4f4f4;">14:21</div>
<div class="t" style="left:1090.5px;top:660.6px;font-size:9.6px;color:#f4f4f4;">2022/3/15</div>
<!-- /BOTTOM -->

<div class="tile" style="top:16px"></div>
<div class="tile" style="top:129px;border:2px solid #18b463"></div>
<div class="tile" style="top:242px"></div>
<div class="tile" style="top:356px"></div>
<div class="tile" style="top:469px"></div>
<div class="tile" style="top:582px;height:120px"></div>

<!-- PANEL -->
<svg class="a" style="left:1214px;top:39px;filter:blur(.45px)" width="52" height="52" viewBox="0 0 52 52"><defs><clipPath id="c0"><circle cx="26" cy="26" r="26"/></clipPath></defs><g clip-path="url(#c0)"><defs><radialGradient id="sun" cx=".5" cy=".22" r=".55"><stop offset="0" stop-color="#fffdf0"/><stop offset=".3" stop-color="#fbe2a8"/><stop offset=".7" stop-color="#d39a58"/><stop offset="1" stop-color="#b07844" stop-opacity="0"/></radialGradient><linearGradient id="grd" x1="0" y1="0" x2="0" y2="1"><stop offset="0" stop-color="#c08850"/><stop offset=".5" stop-color="#a87040"/><stop offset="1" stop-color="#8a5a32"/></linearGradient></defs>
<rect width="52" height="52" fill="url(#grd)"/><rect x="0" y="4" width="19" height="30" fill="#b27c46"/><rect x="34" y="4" width="18" height="30" fill="#b0783f"/><rect x="0" y="18" width="19" height="4" fill="#c99258"/>
<rect width="52" height="52" fill="url(#sun)"/><rect x="19" y="-2" width="15" height="25" fill="#fff8e0" opacity=".8" filter="url(#bl)"/><defs><filter id="bl"><feGaussianBlur stdDeviation="1.8"/></filter></defs>
<path d="M26 30l-26 22h10zM26 30l26 22H42z" fill="#9a6638" opacity=".4"/><path d="M25 27h2.2v4l1.5 4h-1.2l-1.5-3-1.6 3h-1.2l1.8-4z" fill="#3b2a20"/></g></svg>
<svg class="a" style="left:1214px;top:265px;filter:blur(.45px)" width="52" height="52" viewBox="0 0 52 52"><defs><clipPath id="c1"><circle cx="26" cy="26" r="26"/></clipPath></defs><g clip-path="url(#c1)"><defs><radialGradient id="mist" cx=".6" cy=".35" r=".75"><stop offset="0" stop-color="#fdfefd"/><stop offset=".55" stop-color="#f0f4f0"/><stop offset="1" stop-color="#c5d3c5"/></radialGradient></defs>
<rect width="52" height="52" fill="url(#mist)"/><path d="M0 0h16v52H0z" fill="#cbd8cb" opacity=".55"/><path d="M14 52l8-14h10l6 14z" fill="#d7e0d5" opacity=".7"/>
<path d="M19 34c0-6 2-11 6-13 2-1 4-1 5 0l3-9c.4-1 1.6-1 1.8 0l-.3 11c-.2 3-1.2 6-2 8l.3 6H19z" fill="#c43d50"/><circle cx="26.5" cy="21" r="3.6" fill="#cc4a5c"/><path d="M17 30l2-5 1 12-1.5 6z" fill="#b93a4c"/><path d="M21 37h10v15H21z" fill="#2a2727"/></g></svg>
<svg class="a" style="left:1214px;top:378px;filter:blur(.45px)" width="52" height="52" viewBox="0 0 52 52"><defs><clipPath id="c2"><circle cx="26" cy="26" r="26"/></clipPath></defs><g clip-path="url(#c2)"><rect width="52" height="52" fill="#ebe5d6"/><rect x="6" y="8" width="2" height="44" fill="#d8d0c0"/><rect x="13" y="19" width="39" height="13" fill="#4f555c"/>
<path d="M22 10c0-6 6-8 10-8s9 3 9 10c0 5-1 12-2 18H23c-1-6-1-14-1-20z" fill="#15151a"/><ellipse cx="32" cy="21" rx="6.5" ry="7.5" fill="#ddc7bd"/><path d="M25 12c3-4 10-4 13 0-4-1-9-1-13 0z" fill="#15151a"/>
<path d="M8 52c1-12 6-20 16-22h16c8 2 12 10 12 22z" fill="#eeeadc"/><path d="M25 30h15l1 22H25z" fill="#e55a30"/><path d="M27 32h11v5H27z" fill="#f4e0c8"/><path d="M26 41h14v5H26z" fill="#f0b030"/><path d="M27 47h12v5H27z" fill="#3a70c0"/><circle cx="39" cy="28" r="2" fill="#f0c030"/></g></svg>
<svg class="a" style="left:1214px;top:492px;filter:blur(.45px)" width="52" height="52" viewBox="0 0 52 52"><defs><clipPath id="c3"><circle cx="26" cy="26" r="26"/></clipPath></defs><g clip-path="url(#c3)"><defs><linearGradient id="road" x1="0" y1="0" x2="0" y2="1"><stop offset="0" stop-color="#8090a8"/><stop offset=".4" stop-color="#49648a"/><stop offset="1" stop-color="#6c6c7c"/></linearGradient></defs>
<rect width="52" height="52" fill="url(#road)"/><path d="M0 20c10 8 15 20 18 32H0z" fill="#2f5e9a" opacity=".7"/><path d="M52 22c-8 6-10 18-12 30h12z" fill="#3e5f8a" opacity=".5"/>
<path d="M26 0h2.5l9 52H21z" fill="#f0a53a"/><path d="M0 30c8 4 14 12 16 22H0z" fill="#24508c" opacity=".6"/><g fill="#e8eef5" opacity=".85"><rect x="4" y="13" width="5" height="2.6"/><rect x="10" y="13" width="6" height="2.6"/><rect x="17" y="13" width="9" height="2.6"/><rect x="27" y="13" width="5" height="2.6"/><rect x="33" y="13" width="8" height="2.6"/><rect x="42" y="13" width="6" height="2.6"/><rect x="4" y="20" width="4" height="2.6"/><rect x="9" y="20" width="3" height="2.6"/><rect x="14" y="20" width="8" height="2.6"/><rect x="23" y="20" width="9" height="2.6"/><rect x="33" y="20" width="7" height="2.6"/><rect x="41" y="20" width="3" height="2.6"/></g></g></svg>
<svg class="a" style="left:1214px;top:605px;filter:blur(.45px)" width="52" height="52" viewBox="0 0 52 52"><defs><clipPath id="c4"><circle cx="26" cy="26" r="26"/></clipPath></defs><g clip-path="url(#c4)"><rect width="52" height="52" fill="#c8b596"/><rect x="15" y="-2" width="24" height="34" rx="1.5" fill="#1e1d22"/><rect x="16.5" y="-2" width="20" height="40" fill="#d5cfee"/><path d="M19 6h4v4h-4z" fill="#c8a080" opacity=".8"/><path d="M18 22h17v10H18z" fill="#bdb5d8" opacity=".7"/>
<path d="M0 18c5 0 10 3 13 8l9 10c3-5 9-9 15-10 6-1 12 0 15 1v25H0z" fill="#e5dccd"/><path d="M8 52c3-10 10-16 20-18 10-1 16 6 18 18z" fill="#ece5d8"/><path d="M36 28c6-2 12-1 16 1v5c-5-1-11-1-16-6z" fill="#ede6da"/><rect x="0" y="16" width="3" height="4" fill="#8a4a3a" opacity=".6"/></g></svg>
<div class="a" style="left:1145px;top:107px;width:119px;height:15px;background:#141414"></div>
<svg class="a" style="left:1146px;top:109px" width="9" height="10" viewBox="0 0 9 10"><rect x=".5" y=".5" width="8" height="6" fill="#eee"/><path d="M2.5 5c.5-1.5 1.5-2.5 3-2.5V1.5l2 1.5-2 1.5V3.5c-1 0-2 .5-3 1.5z" fill="#141414"/><path d="M2 9h5M4.5 6.5V9" stroke="#eee" stroke-width=".9"/></svg>
<svg class="a" style="left:1159px;top:109.5px" width="9" height="10" viewBox="0 0 9 10"><rect x="2.8" y="0.5" width="3.6" height="6" rx="1.8" fill="#eee"/><path d="M1.5 4.5c0 2 1.3 3.2 3 3.2s3-1.2 3-3.2M4.5 7.7V9.5M2.5 9.5h4" fill="none" stroke="#eee" stroke-width=".9"/><path d="M0.5 9L8.5 1" stroke="#e23b3b" stroke-width="1.2"/></svg>
<div class="t" style="left:1173px;top:112.1px;font-size:7.5px;color:#f2f2f2">李晖-南开大学的屏幕共享</div>
<div class="a" style="left:1145px;top:333px;width:77.5px;height:14.5px;background:#141414"></div>
<div class="a" style="left:1146px;top:333.5px;width:14px;height:13.5px;background:#f08a24"></div><svg class="a" style="left:1147.5px;top:335px" width="11" height="11" viewBox="0 0 11 11"><circle cx="5.5" cy="3.5" r="2.3" fill="#fff"/><path d="M1 10.5c0-3 2-4.5 4.5-4.5s4.5 1.5 4.5 4.5z" fill="#fff"/></svg>
<svg class="a" style="left:1164px;top:335.5px" width="9" height="10" viewBox="0 0 9 10"><rect x="2.8" y="0.5" width="3.6" height="6" rx="1.8" fill="#eee"/><path d="M1.5 4.5c0 2 1.3 3.2 3 3.2s3-1.2 3-3.2M4.5 7.7V9.5M2.5 9.5h4" fill="none" stroke="#eee" stroke-width=".9"/><path d="M0.5 9L8.5 1" stroke="#e23b3b" stroke-width="1.2"/></svg>
<div class="t" style="left:1177px;top:337.9px;font-size:7.5px;color:#f2f2f2">21博 吴锦栋</div>
<div class="a" style="left:1145px;top:446.5px;width:82px;height:14.5px;background:#141414"></div>
<div class="a" style="left:1146px;top:447px;width:14px;height:13.5px;background:#1e7cf0"></div><svg class="a" style="left:1147.5px;top:448.5px" width="11" height="11" viewBox="0 0 11 11"><circle cx="5.5" cy="3.5" r="2.3" fill="#fff"/><path d="M1 10.5c0-3 2-4.5 4.5-4.5s4.5 1.5 4.5 4.5z" fill="#fff"/></svg>
<svg class="a" style="left:1164px;top:449px" width="9" height="10" viewBox="0 0 9 10"><rect x="2.8" y="0.5" width="3.6" height="6" rx="1.8" fill="#eee"/><path d="M1.5 4.5c0 2 1.3 3.2 3 3.2s3-1.2 3-3.2M4.5 7.7V9.5M2.5 9.5h4" fill="none" stroke="#eee" stroke-width=".9"/><path d="M0.5 9L8.5 1" stroke="#e23b3b" stroke-width="1.2"/></svg>
<div class="t" style="left:1177px;top:451.4px;font-size:7.5px;color:#f2f2f2">21级科硕杨捷</div>
<div class="a" style="left:1145px;top:560px;width:78px;height:15px;background:#141414"></div>
<svg class="a" style="left:1147px;top:562.5px" width="9" height="10" viewBox="0 0 9 10"><rect x="2.8" y="0.5" width="3.6" height="6" rx="1.8" fill="#eee"/><path d="M1.5 4.5c0 2 1.3 3.2 3 3.2s3-1.2 3-3.2M4.5 7.7V9.5M2.5 9.5h4" fill="none" stroke="#eee" stroke-width=".9"/><path d="M0.5 9L8.5 1" stroke="#e23b3b" stroke-width="1.2"/></svg>
<div class="t" style="left:1161px;top:565.1px;font-size:7.5px;color:#f2f2f2">20级 - 博-王莉琴</div>
<div class="a" style="left:1145px;top:673.5px;width:73.5px;height:15px;background:#141414"></div>
<svg class="a" style="left:1147px;top:676px" width="9" height="10" viewBox="0 0 9 10"><rect x="2.8" y="0.5" width="3.6" height="6" rx="1.8" fill="#eee"/><path d="M1.5 4.5c0 2 1.3 3.2 3 3.2s3-1.2 3-3.2M4.5 7.7V9.5M2.5 9.5h4" fill="none" stroke="#eee" stroke-width=".9"/><path d="M0.5 9L8.5 1" stroke="#e23b3b" stroke-width="1.2"/></svg>
<div class="t" style="left:1161px;top:678.6px;font-size:7.5px;color:#f2f2f2">21-科硕-高雅安</div>
<svg class="a" style="left:1146px;top:131px;filter:blur(.35px)" width="187" height="104" viewBox="0 0 190 106" preserveAspectRatio="none">
<rect width="190" height="106" fill="#d6d2ca"/>
<rect y="0" width="190" height="7" fill="#cdc8bf"/><rect y="7" width="190" height="2.5" fill="#8f8a80"/>
<rect y="9.5" width="190" height="25" fill="#dbd8d2"/>
<rect y="34" width="190" height="72" fill="#c7b79c"/>
<rect y="50" width="190" height="2.5" fill="#e2d8c4"/><rect y="76" width="190" height="2.5" fill="#e2d8c4"/><rect y="86" width="190" height="2" fill="#d8ccb4"/>
<rect x="1" y="37" width="20" height="13" fill="#eceae6"/><rect x="21" y="41" width="31" height="9" fill="#efe6d2"/><rect x="21" y="45" width="31" height="1" fill="#c9bfa9"/>
<rect x="56" y="5" width="7" height="71" fill="#aeaaa2"/><rect x="54" y="4" width="11" height="3" fill="#6f6b66"/>
<rect x="63" y="39" width="14" height="11" fill="#f1f0ed"/><circle cx="70" cy="31" r="3.6" fill="#2c2b2b"/>
<rect x="140" y="36" width="32" height="14" fill="#eeebe3"/><rect x="140" y="36" width="32" height="14" fill="url(#bk)"/>
<defs><pattern id="bk" width="3" height="14" patternUnits="userSpaceOnUse"><rect width="1" height="14" fill="#b9b4aa"/></pattern></defs>
<rect x="150" y="59" width="35" height="17" fill="#e6e2db"/><rect x="150" y="59" width="35" height="17" fill="url(#bk)"/>
<rect x="172" y="37" width="12" height="13" fill="#efe3cb"/>
<path d="M4 75c0-4 2-8 4-10l1-4h3l1 4c2 2 3 6 3 10z" fill="#eceae6"/><ellipse cx="22" cy="73" rx="5" ry="2.5" fill="#f0eee9"/>
<rect x="30" y="63" width="27" height="25" fill="#8c9396"/>
<rect x="0" y="88" width="30" height="18" fill="#77736c"/><rect x="170" y="86" width="20" height="14" fill="#e7e3dc"/>
<defs><linearGradient id="face" x1="0" y1="0" x2="0" y2="1"><stop offset="0" stop-color="#e3a595"/><stop offset=".55" stop-color="#d8897c"/><stop offset="1" stop-color="#c06a60"/></linearGradient></defs>
<path d="M80 10C84 2 94 -1 104 -1C116 -1 128 4 133 14C139 26 142 46 144 68C145 80 147 88 150 92H72C75 84 75 74 75 62C75 42 76 22 80 10z" fill="#16151b"/>
<ellipse cx="106" cy="48" rx="23" ry="34" fill="url(#face)"/>
<path d="M83 30C86 14 96 8 108 9C100 14 92 22 86 40z" fill="#16151b"/>
<path d="M91 42c3-1.2 7-1.2 9 0M113 42c3-1.2 7-1.2 9 0" stroke="#4a2a2a" stroke-width="1.6" fill="none"/>
<path d="M104 50c-1 5-2 8 0 9h5" stroke="#b06058" stroke-width="1" fill="none"/>
<path d="M100 67c4 1.5 10 1.5 14 0" stroke="#b03a3a" stroke-width="2.6" fill="none"/>
<path d="M95 78c4 6 18 6 23 0l2 12H93z" fill="#a85a55"/>
<path d="M28 106c2-10 8-20 18-24 10-4 22-4 30-3l20 8h20l22-8c10 0 24 4 30 12 4 4 6 10 6 15z" fill="#14151e"/>
</svg>
<div class="a" style="left:1145px;top:222px;width:77px;height:13.5px;background:rgba(20,20,24,.45)"></div>
<svg class="a" style="left:1148px;top:222.5px" width="10" height="12" viewBox="0 0 10 12"><rect x="2.8" y="0.5" width="4.4" height="7" rx="2.2" fill="#2fd46a"/><path d="M1.3 5c0 2.5 1.5 3.8 3.7 3.8S8.7 7.5 8.7 5M5 8.8v2M2.8 11h4.4" fill="none" stroke="#eee" stroke-width="1"/></svg>
<div class="t" style="left:1161px;top:226.3px;font-size:7.5px;color:#f2f2f2">吴晨光-中山大学</div>
<!-- /PANEL -->
<div class="green" style="left:0;top:33px;width:85px;height:4px"></div>
<div class="green" style="left:0;top:33px;width:4px;height:85px"></div>
<div class="green" style="left:1053px;top:33px;width:85px;height:4px"></div>
<div class="green" style="left:1134px;top:33px;width:4px;height:85px"></div>
<div class="green" style="left:0;top:668px;width:85px;height:4px"></div>
<div class="green" style="left:0;top:587px;width:4px;height:85px"></div>
<div class="green" style="left:1053px;top:668px;width:85px;height:4px"></div>
<div class="green" style="left:1134px;top:587px;width:4px;height:85px"></div>
<div id="wstrip" class="a" style="left:1134px;top:686.5px;width:106px;height:2px;background:#f2f2f2"></div>
<svg class="a" style="left:1115px;top:683px" width="20" height="6" viewBox="0 0 20 6"><path d="M0 6L16 1l3 0v5z" fill="#f0642a"/></svg>
</body></html>
